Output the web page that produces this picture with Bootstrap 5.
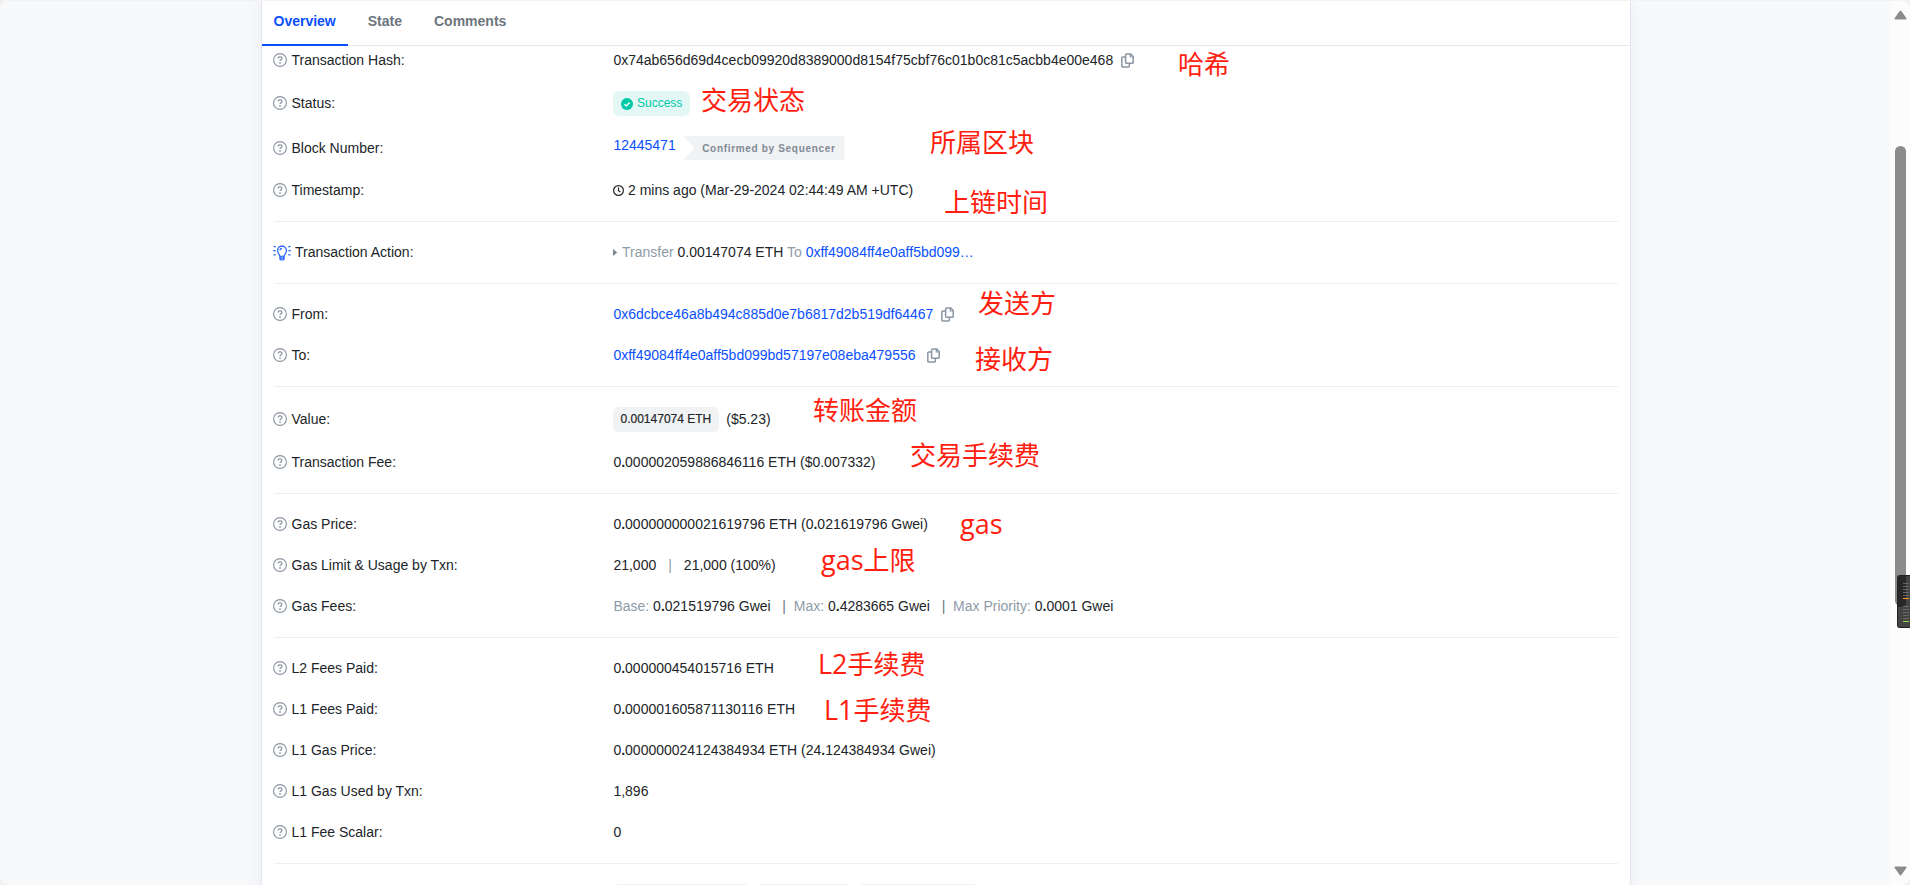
<!DOCTYPE html>
<html lang="en">
<head>
<meta charset="utf-8">
<meta name="viewport" content="width=device-width, initial-scale=1">
<title>Transaction Details</title>
<link href="https://cdn.jsdelivr.net/npm/bootstrap@5.3.0/dist/css/bootstrap.min.css" rel="stylesheet">
<style>
  html, body { height: 100%; overflow: hidden; }
  body { background: #f1f1f1; color: #212529; font: 14px/21px "Liberation Sans", Arial, sans-serif; }
  a { color: #0a50ff; text-decoration: none; }
  .window { height: 885px; border-radius: 9px; background: #f8f9fb; }
  .window-edge { inset: 0; border-top: 1px solid #f3f3f4; border-radius: 9px; pointer-events: none; z-index: 5; }
  .page-area { width: 1891px; }
  .panel { width: 1370px; height: 900px; margin-left: 261px; background: #fff; border: solid #e3e6f0; border-width: 0 1px; box-shadow: 0 0 16px rgba(130,140,155,.1); }
  .tabs { height: 46px; border-bottom: 1px solid #e5e8f3; }
  .tabs .nav-link { height: 46px; padding: 11px 12px 0 11.5px; margin-right: 8.5px; font-weight: 700; color: #6c757d; border-bottom: 2px solid transparent; }
  .tabs .nav-link.active { color: #0a50ff; border-color: #0a50ff; }
  .details { padding: 0 12px; }
  .field { padding: 10px 0; }
  .field-first { padding-top: 4px; }
  .field-name { width: 339.4px; flex: none; }
  .q { width: 14px; height: 14px; margin: -1px 4.5px 0 -1px; flex: none; color: #8a93a2; }
  .rule { height: 1px; margin: 10px 0; background: #edeff3; }
  .dim { color: #8f9ba8; }
  .bar { color: #6c7683; }
  .block-link { line-height: 19px; padding-bottom: 5px; }
  .bulb { margin-left: -1px; margin-right: 4px; }
  .pill { height: 25px; margin-left: -.4px; padding: 0 8px; border-radius: 6px; font-size: 12px; }
  .pill-ok { background: #e3f8f5; color: #00c9a7; }
  .pill-value { margin-right: 7.5px; padding: 0 7.5px; background: #f1f2f4; -webkit-text-stroke: .2px #212529; }
  .clock { margin: 0 4px 0 -.4px; }
  .chip { height: 24px; margin-left: 7.5px; padding: 0 9px 0 19px; border-radius: 0 4px 4px 0; background: #f1f2f4; color: #7f8995; font-size: 10px; font-weight: 700; letter-spacing: .68px; clip-path: polygon(0 0, 100% 0, 100% 100%, 0 100%, 11px 50%); }
  .copy { width: 13px; height: 15px; margin-top: -1px; color: #8a96a3; }
  .stub { height: 25px; border-radius: 6px; background: #f1f2f4; }
  .note { color: #ff1e0f; font: 26px/26px "Open Sans", "Noto Sans CJK SC", sans-serif; white-space: nowrap; left: var(--x); top: var(--y); }
  .note-latin { font-size: 27px; }
  .scroll { width: 19px; background: #fcfcfc; }
  .thumb { left: 4px; top: 146px; width: 11px; height: 460px; border-radius: 6px; background: #8b8b8b; }
  .arrow { left: 3px; width: 13px; height: 10px; }
  .meter { right: 0; top: 575px; width: 13px; height: 53px; border: 1px solid #222; border-right: 0; border-radius: 3px 0 0 3px; background: #444; z-index: 4; }
</style>
</head>
<body>
<svg class="d-none" xmlns="http://www.w3.org/2000/svg">
  <symbol id="i-q" viewBox="0 0 14 14"><circle cx="7" cy="7" r="6.400" fill="none" stroke="currentColor" stroke-width="1.100"/><path d="M5.100 5.500c0-1 .7-1.600 1.700-1.600h.5c1 0 1.700.6 1.700 1.500 0 .7-.4 1.100-1 1.500-.6.3-1 .6-1 1.200" fill="none" stroke="currentColor" stroke-width="1.200"/><circle cx="7" cy="9.900" r=".85" fill="currentColor"/></symbol>
  <symbol id="i-copy" viewBox="0 0 13 15"><path d="M5.700 1h4.100L12.200 3.500V9.200q0 1.100-1.100 1.100H5.700q-1.100 0-1.100-1.100V2.100Q4.600 1 5.700 1z" fill="none" stroke="currentColor" stroke-width="1.500"/><path d="M9.300 1v3h3" fill="none" stroke="currentColor" stroke-width="1.200"/><path d="M4.600 3.900H1.900Q.8 3.900.8 5v7.900Q.8 14 1.900 14h5.300q1.100 0 1.100-1.100v-2.600" fill="none" stroke="currentColor" stroke-width="1.500"/></symbol>
</svg>
<div class="window position-relative d-flex overflow-hidden">
  <div class="window-edge position-absolute"></div>
  <div class="page-area">
    <main class="panel">
      <nav class="tabs nav flex-nowrap">
        <a class="nav-link active" href="#">Overview</a>
        <a class="nav-link" href="#">State</a>
        <a class="nav-link" href="#">Comments</a>
      </nav>
      <div class="details">
        <div class="field field-first d-flex align-items-center"><div class="field-name d-flex align-items-center"><svg class="q"><use href="#i-q"/></svg>Transaction Hash:</div><span>0x74ab656d69d4cecb09920d8389000d8154f75cbf76c01b0c81c5acbb4e00e468</span><svg class="copy ms-2"><use href="#i-copy"/></svg></div>
        <div class="field d-flex align-items-center"><div class="field-name d-flex align-items-center"><svg class="q"><use href="#i-q"/></svg>Status:</div><span class="pill pill-ok d-flex align-items-center"><svg class="me-1" width="12" height="12" viewBox="0 0 12 12"><circle cx="6" cy="6" r="6" fill="#00c9a7"/><path d="M3.500 6.200 5.300 8l3.300-3.500" fill="none" stroke="#fff" stroke-width="1.400"/></svg>Success</span></div>
        <div class="field d-flex align-items-center"><div class="field-name d-flex align-items-center"><svg class="q"><use href="#i-q"/></svg>Block Number:</div><a class="block-link" href="#">12445471</a><span class="chip d-flex align-items-center">Confirmed by Sequencer</span></div>
        <div class="field d-flex align-items-center"><div class="field-name d-flex align-items-center"><svg class="q"><use href="#i-q"/></svg>Timestamp:</div><svg class="clock" width="11" height="11" viewBox="0 0 11 11" fill="none" stroke="#212529" stroke-width="1.200"><circle cx="5.500" cy="5.500" r="4.900"/><path d="M5.500 2.500v3.200l2 1.300"/></svg><span>2 mins ago (Mar-29-2024 02:44:49 AM +UTC)</span></div>
        <div class="rule"></div>
        <div class="field d-flex align-items-center"><div class="field-name d-flex align-items-center"><svg class="bulb" width="18" height="16" viewBox="0 0 18 16" fill="none" stroke="#0a50ff" stroke-width="1.100"><path d="M6.900 11.200C6.700 9.500 4.600 8.400 4.600 5.500a4.400 4.400 0 0 1 8.800 0c0 2.900-2.100 4-2.300 5.700zM6.900 11.200v2.600q0 1.200 1.200 1.200h1.800q1.200 0 1.200-1.200v-2.600M6.900 13.100h4.200M6.800 5.400Q7 3.700 8.800 3.400M.6 1.200l2.100.9M0 5.700h2.700M.6 10.300l2.100-.9M17.400 1.200l-2.100.9M18 5.700h-2.700M17.400 10.300l-2.100-.9"/></svg>Transaction Action:</div><svg class="clock" width="5" height="7" viewBox="0 0 5 7"><path d="M0 0v7l4.200-3.500z" fill="#7c8792"/></svg><span><span class="dim">Transfer</span> 0.00147074 ETH <span class="dim">To</span> <a href="#">0xff49084ff4e0aff5bd099…</a></span></div>
        <div class="rule"></div>
        <div class="field d-flex align-items-center"><div class="field-name d-flex align-items-center"><svg class="q"><use href="#i-q"/></svg>From:</div><a href="#">0x6dcbce46a8b494c885d0e7b6817d2b519df64467</a><svg class="copy ms-2"><use href="#i-copy"/></svg></div>
        <div class="field d-flex align-items-center"><div class="field-name d-flex align-items-center"><svg class="q"><use href="#i-q"/></svg>To:</div><a class="me-1" href="#">0xff49084ff4e0aff5bd099bd57197e08eba479556</a><svg class="copy ms-2"><use href="#i-copy"/></svg></div>
        <div class="rule"></div>
        <div class="field d-flex align-items-center"><div class="field-name d-flex align-items-center"><svg class="q"><use href="#i-q"/></svg>Value:</div><span class="pill pill-value d-flex align-items-center">0.00147074 ETH</span><span>($5.23)</span></div>
        <div class="field d-flex align-items-center"><div class="field-name d-flex align-items-center"><svg class="q"><use href="#i-q"/></svg>Transaction Fee:</div><span>0<b>.</b>000002059886846116 ETH ($0.007332)</span></div>
        <div class="rule"></div>
        <div class="field d-flex align-items-center"><div class="field-name d-flex align-items-center"><svg class="q"><use href="#i-q"/></svg>Gas Price:</div><span>0<b>.</b>000000000021619796 ETH (0<b>.</b>021619796 Gwei)</span></div>
        <div class="field d-flex align-items-center"><div class="field-name d-flex align-items-center"><svg class="q"><use href="#i-q"/></svg>Gas Limit &amp; Usage by Txn:</div><span>21,000</span><span class="dim px-2 mx-1">|</span><span>21,000 (100%)</span></div>
        <div class="field d-flex align-items-center"><div class="field-name d-flex align-items-center"><svg class="q"><use href="#i-q"/></svg>Gas Fees:</div><span><span class="dim">Base:</span> 0<b>.</b>021519796 Gwei &nbsp; <span class="bar">|</span> &nbsp;<span class="dim">Max:</span> 0<b>.</b>4283665 Gwei &nbsp; <span class="bar">|</span> &nbsp;<span class="dim">Max Priority:</span> 0<b>.</b>0001 Gwei</span></div>
        <div class="rule"></div>
        <div class="field d-flex align-items-center"><div class="field-name d-flex align-items-center"><svg class="q"><use href="#i-q"/></svg>L2 Fees Paid:</div><span>0<b>.</b>000000454015716 ETH</span></div>
        <div class="field d-flex align-items-center"><div class="field-name d-flex align-items-center"><svg class="q"><use href="#i-q"/></svg>L1 Fees Paid:</div><span>0<b>.</b>000001605871130116 ETH</span></div>
        <div class="field d-flex align-items-center"><div class="field-name d-flex align-items-center"><svg class="q"><use href="#i-q"/></svg>L1 Gas Price:</div><span>0<b>.</b>000000024124384934 ETH (24<b>.</b>124384934 Gwei)</span></div>
        <div class="field d-flex align-items-center"><div class="field-name d-flex align-items-center"><svg class="q"><use href="#i-q"/></svg>L1 Gas Used by Txn:</div><span>1,896</span></div>
        <div class="field d-flex align-items-center"><div class="field-name d-flex align-items-center"><svg class="q"><use href="#i-q"/></svg>L1 Fee Scalar:</div><span>0</span></div>
        <div class="rule"></div>
        <div class="field d-flex"><div class="field-name"></div><div class="stub me-1" style="width:139px"></div><div class="stub me-1" style="width:96px"></div><div class="stub" style="width:123px"></div></div>
      </div>
    </main>
  </div>
  <div class="scroll position-relative">
    <svg class="arrow position-absolute" style="top:10px" viewBox="0 0 13 10"><path d="M6.500 1.500 11.500 8.500h-10z" fill="#8b8b8b" stroke="#8b8b8b" stroke-width="2" stroke-linejoin="round"/></svg>
    <div class="thumb position-absolute"></div>
    <svg class="arrow position-absolute" style="top:866px" viewBox="0 0 13 10"><path d="M6.500 8.500 11.500 1.500h-10z" fill="#8b8b8b" stroke="#8b8b8b" stroke-width="2" stroke-linejoin="round"/></svg>
  </div>
  <div class="meter position-absolute">
    <svg class="d-block" width="12" height="51" viewBox="0 0 12 51"><path d="M0 0h8v26q0 4-4 5H0z" fill="#272727"/><path d="M5 7.500h6M5 10.500h6M5 13.500h6M5 16.500h6M5 19.500h6M5 30.500h6M5 33.500h6M5 36.500h6M5 39.500h6M5 42.500h6" stroke="#666"/><path d="M5 22.500h6" stroke="#ff9d26"/><path d="M5 45.500h6" stroke="#8fe04a"/></svg>
  </div>
  <!-- Annotations lying over the page -->
  <span class="note position-absolute" style="--x:1178px;--y:51px">哈希</span>
  <span class="note position-absolute" style="--x:701px;--y:87px">交易状态</span>
  <span class="note position-absolute" style="--x:930px;--y:129px">所属区块</span>
  <span class="note position-absolute" style="--x:944px;--y:189px">上链时间</span>
  <span class="note position-absolute" style="--x:978px;--y:290px">发送方</span>
  <span class="note position-absolute" style="--x:975px;--y:346px">接收方</span>
  <span class="note position-absolute" style="--x:813px;--y:397px">转账金额</span>
  <span class="note position-absolute" style="--x:910px;--y:442px">交易手续费</span>
  <span class="note position-absolute" style="--x:960px;--y:511px"><span class="note-latin">gas</span></span>
  <span class="note position-absolute" style="--x:821px;--y:547px"><span class="note-latin">gas</span>上限</span>
  <span class="note position-absolute" style="--x:818px;--y:651px"><span class="note-latin">L2</span>手续费</span>
  <span class="note position-absolute" style="--x:824px;--y:697px"><span class="note-latin">L1</span>手续费</span>
</div>
<script src="https://cdn.jsdelivr.net/npm/bootstrap@5.3.0/dist/js/bootstrap.bundle.min.js"></script>
</body>
</html>
